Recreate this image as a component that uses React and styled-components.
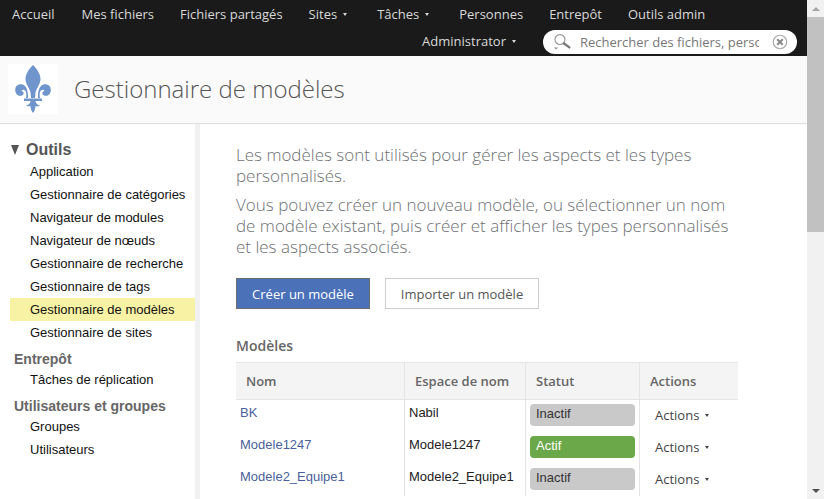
import React from "react";
import styled, { createGlobalStyle } from "styled-components";

const Global = createGlobalStyle`
  html, body { margin: 0; padding: 0; height: 100%; overflow: hidden; background: #fff; }
  * { box-sizing: border-box; }
`;
const Shell = styled.div`display: flex; width: 824px; height: 499px; overflow: hidden;`;
const Page = styled.div`width: 807px; height: 499px; display: flex; flex-direction: column; overflow: hidden;`;
const Scrollbar = styled.div`width: 17px; background: #f1f1f1; display: flex; flex-direction: column; align-items: center; justify-content: space-between;`;
const ScrollTop = styled.div`width: 100%; display: flex; flex-direction: column; align-items: center;`;
const ArrowBox = styled.div`height: 17px; display: flex; align-items: center; justify-content: center;`;
const Arrow = styled.div`
  width: 0; height: 0; border-left: 4px solid transparent; border-right: 4px solid transparent;
  ${p => p.$up ? `border-bottom: 4px solid ${p.$c};` : `border-top: 4px solid ${p.$c};`}
`;
const Thumb = styled.div`width: 100%; height: 215px; background: #c1c1c1;`;

const Header = styled.header`height: 56px; flex: none; background: #1a1a1a; display: flex; flex-direction: column; font: 13px/18px "Open Sans", sans-serif; color: #d9d9d9;`;
const NavRow = styled.nav`display: flex; height: 28px; padding: 5px 0 0 12px; align-items: flex-start;`;
const NavItem = styled.span`margin-right: ${p => p.$mr}px; white-space: nowrap; display: inline-flex; align-items: center;`;
const Caret = styled.i`
  display: inline-block; width: 0; height: 0; margin-left: 6px; margin-top: 1px;
  border-left: 2.5px solid transparent; border-right: 2.5px solid transparent; border-top: 3px solid ${p => p.$c || "#d9d9d9"};
`;
const UserRow = styled.div`display: flex; justify-content: flex-end; align-items: flex-start; padding-right: 10px; height: 28px;`;
const User = styled.span`display: inline-flex; align-items: center; margin: 4px 27px 0 0;`;
const Search = styled.div`
  width: 254px; height: 24px; margin-top: 2px; background: #fff; border-radius: 12px; display: flex; align-items: center;
  padding: 0 9px 0 9px; color: #777; font: 13px/18px "Open Sans", sans-serif;
`;
const SearchText = styled.span`width: 180px; margin-left: 8px; overflow: hidden; white-space: nowrap;`;
const Clear = styled.svg`margin-left: 13px;`;

const TitleBar = styled.div`height: 68px; flex: none; background: #fafafa; border-bottom: 1px solid #ddd; display: flex; align-items: center; padding: 0 0 0 8px;`;
const Logo = styled.div`width: 50px; height: 50px; background: #fff; display: flex; align-items: center; justify-content: center; margin: -2px 16px 0 0;`;
const Title = styled.h1`margin: 0 0 2px; font: 300 24px/32px "Open Sans", sans-serif; color: #555;`;

const Body = styled.div`flex: 1; display: flex; min-height: 0;`;
const Side = styled.aside`width: 200px; flex: none; border-right: 5px solid #f1f1f1; padding: 17px 0 0 10px; font: 13px/23px "Liberation Sans", sans-serif; color: #111;`;
const Group = styled.div`display: flex; align-items: center; font: bold 16px/18px "Liberation Sans", sans-serif; color: #555; padding-left: 1px;`;
const SubGroup = styled.div`font: bold 14px/18px "Liberation Sans", sans-serif; color: #666; padding-left: 4px; margin-top: ${p => p.$mt}px;`;
const Tri = styled.i`display: inline-block; width: 0; height: 0; margin-right: 7px; border-left: 4.5px solid transparent; border-right: 4.5px solid transparent; border-top: 10px solid #555;`;
const SideList = styled.ul`list-style: none; margin: ${p => p.$mt || 0}px 0 0; padding: 0;`;
const SideItem = styled.li`height: 23px; padding-left: 20px; line-height: 23px; white-space: nowrap; background: ${p => p.$active ? "#f8f2a4" : "transparent"};`;

const Main = styled.main`flex: 1; padding: 20px 69px 0 36px; overflow: hidden;`;
const Lead = styled.p`margin: 0 0 8px; font: 300 17px/21px "Open Sans", sans-serif; color: #6e7074;`;
const Buttons = styled.div`display: flex; gap: 15px; margin-top: 21px;`;
const Button = styled.button`
  height: 31px; padding: 0; width: ${p => p.$w}px; font: 13px/18px "Open Sans", sans-serif; cursor: pointer;
  background: ${p => p.$primary ? "#4b71b9" : "#fff"}; color: ${p => p.$primary ? "#fff" : "#555"};
  border: 1px solid ${p => p.$primary ? "#6d6d6d" : "#ccc"};
`;
const SectionTitle = styled.h2`margin: 27px 0 6px; font: 600 14px/20px "Open Sans", sans-serif; color: #666;`;
const Table = styled.table`width: 502px; table-layout: fixed; border-collapse: separate; border-spacing: 0;`;
const Th = styled.th`
  height: 38px; padding: 0 0 0 10px; text-align: left; width: ${p => p.$w}px; background: #f4f4f4;
  border-top: 1px solid #e4e4e4; border-bottom: 1px solid #e4e4e4; border-left: ${p => p.$first ? "none" : "1px solid #e4e4e4"};
  font: 600 13px/18px "Open Sans", sans-serif; color: #666;
`;
const Td = styled.td`
  height: 32px; padding: 0 0 0 ${p => p.$pl ?? 4}px; border-left: ${p => p.$first ? "none" : "1px solid #e4e4e4"};
  font: 13px/18px "Liberation Sans", sans-serif; color: #222; vertical-align: top; white-space: nowrap;
`;
const CellText = styled.div`padding-top: 4px;`;
const NameLink = styled.a`color: #4b5f9c; text-decoration: none;`;
const Badge = styled.div`
  width: 105px; height: 22px; margin-top: 4px; border-radius: 4px; padding-left: 6px; line-height: 20px;
  background: ${p => p.$on ? "#6aa84a" : "#c9c9c9"}; color: ${p => p.$on ? "#fff" : "#333"};
`;
const ActionBtn = styled.div`display: flex; align-items: center; padding: 5px 0 0 15px; font: 13px/20px "Open Sans", sans-serif; color: #444;`;

const Fleur = () => (
  <svg width="36" height="48" viewBox="0 0 36 48" fill="#6f95cc" aria-hidden="true">
    <path d="M18 0C14 4 10.500 9 10.500 14C10.500 19 14 22 15.500 27.500L16 33H20L20.500 27.500C22 22 25.500 19 25.500 14C25.500 9 22 4 18 0Z" />
    <path d="M13 33C13.500 27 11.500 22 9.500 20.500C7 18.500 3.500 19 1.500 21C-.5 23.500 -.2 28 2.500 30C4.500 31.500 7.500 31 8.500 29C9 27.500 8 26 6.500 26C7.500 24 10 24.500 11 27C11.500 28.800 11.500 31 11 33Z" />
    <path d="M23 33C22.500 27 24.500 22 26.500 20.500C29 18.500 32.500 19 34.500 21C36.500 23.500 36.200 28 33.500 30C31.500 31.500 28.500 31 27.500 29C27 27.500 28 26 29.500 26C28.500 24 26 24.500 25 27C24.500 28.800 24.500 31 25 33Z" />
    <path d="M9 33.500H27V36H9Z" />
    <path d="M15.500 36H20.500C20.800 38.500 22.500 40 25 40.500C23 41.500 21.500 41.500 20.500 41C20.500 43.500 19.500 46 18 48C16.500 46 15.500 43.500 15.500 41C14.500 41.500 13 41.500 11 40.500C13.500 40 15.200 38.500 15.500 36Z" />
  </svg>
);
const SearchIcon = () => (
  <svg width="20" height="20" viewBox="0 0 20 20" fill="none" aria-hidden="true">
    <circle cx="8" cy="7.500" r="5" stroke="#999" strokeWidth="1.200" />
    <path d="M12 11.500L17.500 15.500" stroke="#777" strokeWidth="2.200" strokeLinecap="round" />
    <path d="M2 15.500H6L4 17.500Z" fill="#888" />
  </svg>
);
const ClearIcon = () => (
  <Clear width="16" height="16" viewBox="0 0 16 16" fill="none" aria-hidden="true">
    <circle cx="8" cy="8" r="6.800" stroke="#aaa" strokeWidth="1.200" />
    <path d="M5.200 5.200L10.800 10.800M10.800 5.200L5.200 10.800" stroke="#888" strokeWidth="2" />
  </Clear>
);

const nav = [["Accueil", 27], ["Mes fichiers", 26], ["Fichiers partagés", 26], ["Sites", 30, true], ["Tâches", 30, true], ["Personnes", 26], ["Entrepôt", 26], ["Outils admin", 0]];
const outils = ["Application", "Gestionnaire de catégories", "Navigateur de modules", "Navigateur de nœuds", "Gestionnaire de recherche", "Gestionnaire de tags", "Gestionnaire de modèles", "Gestionnaire de sites"];
const rows = [["BK", "Nabil", false], ["Modele1247", "Modele1247", true], ["Modele2_Equipe1", "Modele2_Equipe1", false]];

export default function App() {
  return (
    <Shell>
      <Global />
      <Page>
        <Header>
          <NavRow>
            {nav.map(([t, mr, c]) => <NavItem key={t} $mr={mr}>{t}{c && <Caret />}</NavItem>)}
          </NavRow>
          <UserRow>
            <User>Administrator<Caret /></User>
            <Search><SearchIcon /><SearchText>Rechercher des fichiers, personnes</SearchText><ClearIcon /></Search>
          </UserRow>
        </Header>
        <TitleBar>
          <Logo><Fleur /></Logo>
          <Title>Gestionnaire de modèles</Title>
        </TitleBar>
        <Body>
          <Side>
            <Group><Tri />Outils</Group>
            <SideList $mt={1}>
              {outils.map(t => <SideItem key={t} $active={t === "Gestionnaire de modèles"}>{t}</SideItem>)}
            </SideList>
            <SubGroup $mt={6}>Entrepôt</SubGroup>
            <SideList>
              <SideItem>Tâches de réplication</SideItem>
            </SideList>
            <SubGroup $mt={6}>Utilisateurs et groupes</SubGroup>
            <SideList>
              <SideItem>Groupes</SideItem>
              <SideItem>Utilisateurs</SideItem>
            </SideList>
          </Side>
          <Main>
            <Lead>Les modèles sont utilisés pour gérer les aspects et les types personnalisés.</Lead>
            <Lead>Vous pouvez créer un nouveau modèle, ou sélectionner un nom de modèle existant, puis créer et afficher les types personnalisés et les aspects associés.</Lead>
            <Buttons>
              <Button $primary $w={134}>Créer un modèle</Button>
              <Button $w={154}>Importer un modèle</Button>
            </Buttons>
            <SectionTitle>Modèles</SectionTitle>
            <Table>
              <thead>
                <tr>
                  <Th $first $w={168}>Nom</Th>
                  <Th $w={121}>Espace de nom</Th>
                  <Th $w={114}>Statut</Th>
                  <Th $w={99}>Actions</Th>
                </tr>
              </thead>
              <tbody>
                {rows.map(([n, ns, on]) => (
                  <tr key={n}>
                    <Td $first><CellText><NameLink href="#">{n}</NameLink></CellText></Td>
                    <Td><CellText>{ns}</CellText></Td>
                    <Td><Badge $on={on}>{on ? "Actif" : "Inactif"}</Badge></Td>
                    <Td $pl={0}><ActionBtn>Actions<Caret $c="#444" /></ActionBtn></Td>
                  </tr>
                ))}
              </tbody>
            </Table>
          </Main>
        </Body>
      </Page>
      <Scrollbar>
        <ScrollTop>
          <ArrowBox><Arrow $up $c="#a3a3a3" /></ArrowBox>
          <Thumb />
        </ScrollTop>
        <ArrowBox><Arrow $c="#505050" /></ArrowBox>
      </Scrollbar>
    </Shell>
  );
}
